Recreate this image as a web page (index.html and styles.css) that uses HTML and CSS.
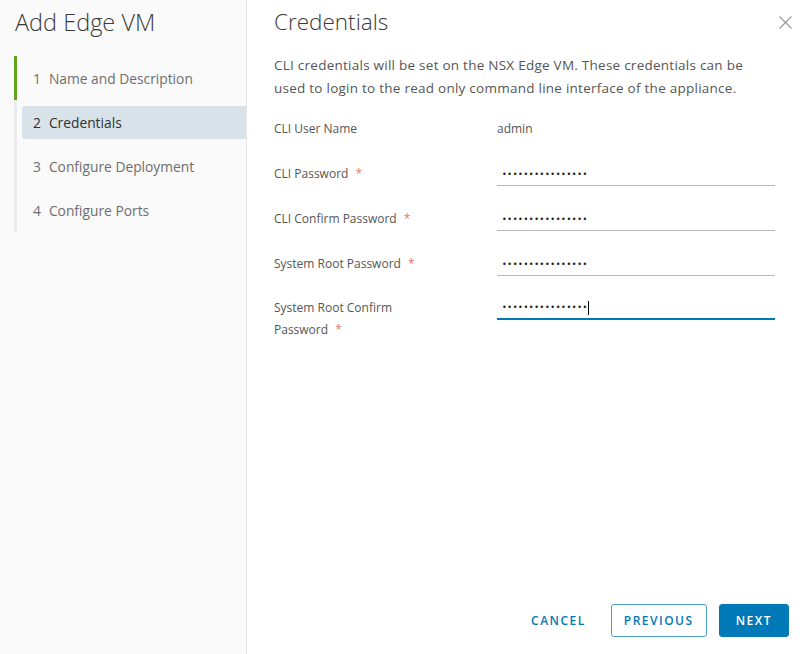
FILE: index.html
```html
<!DOCTYPE html>
<html lang="en">
<head>
<meta charset="utf-8">
<title>Add Edge VM</title>
<link rel="stylesheet" href="styles.css">
</head>
<body>
<div class="wizard">
  <aside class="sidebar">
    <h1 class="wizard-title">Add Edge VM</h1>
    <ol class="steps">
      <li class="step done"><span class="step-link"><span class="num">1</span>Name and Description</span></li>
      <li class="step"><span class="step-link current"><span class="num">2</span>Credentials</span></li>
      <li class="step"><span class="step-link"><span class="num">3</span>Configure Deployment</span></li>
      <li class="step"><span class="step-link"><span class="num">4</span>Configure Ports</span></li>
    </ol>
  </aside>
  <main class="content">
    <header class="content-header">
      <h2 class="page-title">Credentials</h2>
      <button class="close" aria-label="Close">
        <svg width="13" height="13" viewBox="0 0 13 13"><path d="M0.5 0.5L12.5 12.5M12.5 0.5L0.5 12.5" stroke="#9a9a9a" stroke-width="1.2" fill="none"/></svg>
      </button>
    </header>
    <p class="intro">CLI credentials will be set on the NSX Edge VM. These credentials can be used to login to the read only command line interface of the appliance.</p>
    <form class="form">
      <div class="row">
        <label class="label">CLI User Name</label>
        <div class="value">admin</div>
      </div>
      <div class="row">
        <label class="label">CLI Password <span class="req">*</span></label>
        <input class="field" type="password" value="aaaaaaaaaaaaaaaa">
      </div>
      <div class="row">
        <label class="label">CLI Confirm Password <span class="req">*</span></label>
        <input class="field" type="password" value="aaaaaaaaaaaaaaaa">
      </div>
      <div class="row">
        <label class="label">System Root Password <span class="req">*</span></label>
        <input class="field" type="password" value="aaaaaaaaaaaaaaaa">
      </div>
      <div class="row last">
        <label class="label">
          <span class="label-line">System Root Confirm</span>
          <span class="label-line">Password <span class="req">*</span></span>
        </label>
        <div class="field focused"><span class="dots">••••••••••••••••</span><span class="caret"></span></div>
      </div>
    </form>
    <footer class="actions">
      <button class="btn btn-flat" type="button">Cancel</button>
      <button class="btn btn-outline" type="button">Previous</button>
      <button class="btn btn-primary" type="button">Next</button>
    </footer>
  </main>
</div>
</body>
</html>
```
FILE: styles.css
```css
html, body {
  margin: 0;
  padding: 0;
  height: 100%;
}
body {
  font-family: "Open Sans", "Liberation Sans", sans-serif;
  color: #565656;
  background: #ffffff;
}
.wizard {
  display: flex;
  height: 654px;
}
.sidebar {
  width: 246px;
  flex: none;
  background: #fafafa;
  border-right: 1px solid #e4e4e4;
  padding-top: 8px;
}
.wizard-title {
  margin: 0 0 20px 15px;
  font-size: 23.5px;
  line-height: 28px;
  font-weight: 300;
  color: #3a3a3a;
}
.steps {
  list-style: none;
  margin: 0 0 0 14px;
  padding: 0;
}
.step {
  height: 44px;
  border-left: 3px solid #ececec;
  display: flex;
  align-items: center;
}
.step.done {
  border-left-color: #62a420;
}
.step-link {
  margin-left: 5px;
  flex: 1;
  height: 33px;
  display: flex;
  align-items: center;
  padding-left: 11px;
  font-size: 13.8px;
  color: #6e6e6e;
  border-radius: 3px 0 0 3px;
}
.step-link.current {
  background: #d8e3e9;
  color: #313131;
}
.num {
  margin-right: 8px;
}
.content {
  flex: 1;
  display: flex;
  flex-direction: column;
  padding: 8px 15px 17px 27px;
}
.content-header {
  display: flex;
  align-items: center;
  justify-content: space-between;
  height: 28px;
}
.page-title {
  margin: 0;
  font-size: 22.5px;
  line-height: 28px;
  font-weight: 300;
  color: #3a3a3a;
}
.close {
  border: 0;
  background: none;
  padding: 0;
  width: 13px;
  height: 13px;
  display: flex;
  margin-right: 1px;
}
.intro {
  margin: 18px 0 0;
  width: 486px;
  font-size: 13.5px;
  letter-spacing: 0.25px;
  line-height: 23px;
  color: #565656;
}
.form {
  margin-top: 6px;
}
.row {
  display: flex;
  margin-top: 22px;
  min-height: 23px;
}
.row:first-child {
  margin-top: 12px;
}
.row.last {
  margin-top: 21px;
}
.label {
  width: 223px;
  flex: none;
  font-size: 12px;
  line-height: 22px;
  color: #565656;
}
.label-line {
  display: block;
}
.req {
  color: #e37b6a;
  margin-left: 4px;
}
.value {
  font-size: 12px;
  line-height: 22px;
  color: #565656;
}
.field {
  box-sizing: border-box;
  width: 278px;
  height: 23px;
  margin: 0;
  padding: 0 0 0 5px;
  border: 0;
  border-bottom: 1px solid #b8b8b8;
  background: transparent;
  font-family: "DejaVu Sans", sans-serif;
  font-size: 8px;
  letter-spacing: 0.65px;
  color: #1a1a1a;
  outline: none;
}
.field.focused {
  border-bottom: 2px solid #0079b8;
  display: flex;
  align-items: center;
}
.caret {
  display: inline-block;
  width: 1px;
  height: 14px;
  background: #000;
  margin-left: 0;
}
.actions {
  margin-top: auto;
  display: flex;
  justify-content: flex-end;
  gap: 12px;
  padding-right: 4px;
}
.btn {
  box-sizing: border-box;
  height: 33px;
  padding: 0 12px;
  border-radius: 3px;
  font-family: "Open Sans", sans-serif;
  font-size: 12px;
  font-weight: 600;
  letter-spacing: 1.5px;
  text-transform: uppercase;
  cursor: pointer;
}
.btn-flat {
  border: 1px solid transparent;
  background: transparent;
  color: #0079b8;
}
.btn-outline {
  border: 1px solid #4a9fcf;
  background: #fff;
  color: #0079b8;
}
.btn-primary {
  border: 1px solid #0079b8;
  background: #0079b8;
  color: #fff;
  padding: 0 16px;
}
```
